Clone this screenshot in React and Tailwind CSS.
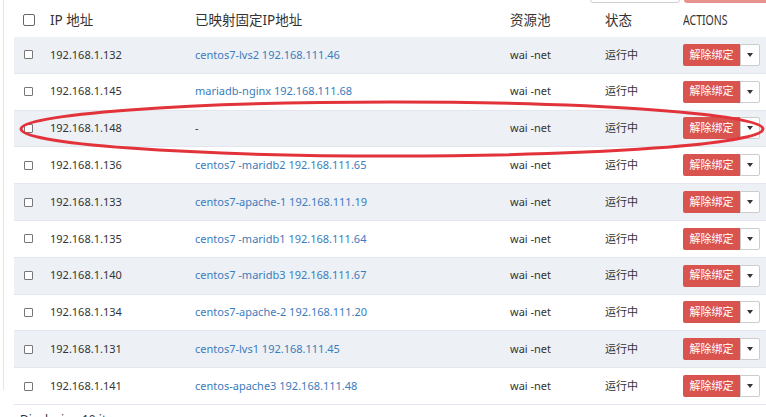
import React from "react";

const rows = [
  { ip: "192.168.1.132", mapped: "centos7-lvs2 192.168.111.46" },
  { ip: "192.168.1.145", mapped: "mariadb-nginx 192.168.111.68" },
  { ip: "192.168.1.148", mapped: "" },
  { ip: "192.168.1.136", mapped: "centos7 -maridb2 192.168.111.65" },
  { ip: "192.168.1.133", mapped: "centos7-apache-1 192.168.111.19" },
  { ip: "192.168.1.135", mapped: "centos7 -maridb1 192.168.111.64" },
  { ip: "192.168.1.140", mapped: "centos7 -maridb3 192.168.111.67" },
  { ip: "192.168.1.134", mapped: "centos7-apache-2 192.168.111.20" },
  { ip: "192.168.1.131", mapped: "centos7-lvs1 192.168.111.45" },
  { ip: "192.168.1.141", mapped: "centos-apache3 192.168.111.48" },
];

const cols = "grid grid-cols-[36px_145px_315px_95px_78px_1fr] items-center";

const App = () => {
  return (
    <div
      className="relative h-[417px] w-[766px] overflow-hidden bg-white text-[#333]"
      style={{ fontFamily: '"Noto Sans", "Noto Sans CJK SC", sans-serif' }}
    >
      <div className="ml-[3px] h-full border-l border-[#e4e4e4] pl-[10px]">
        <div className="-mt-[27px]">
          {/* toolbar, scrolled mostly out of view */}
          <div className="flex h-[30px] justify-end gap-[4px]">
            <div className="w-[90px] rounded-b-[3px] border border-[#cfcfcf] bg-white" />
            <div className="w-[82px] rounded-bl-[3px] bg-[#e8928e]" />
          </div>

          {/* header */}
          <div className={`${cols} h-[34px] text-[13.5px]`}>
            <div className="pl-[9px]">
              <div className="h-[12px] w-[12px] rounded-[2px] border border-[#666] bg-white" />
            </div>
            <div>IP 地址</div>
            <div>已映射固定IP地址</div>
            <div>资源池</div>
            <div>状态</div>
            <div>
              <span className="inline-block origin-left scale-x-[0.78] text-[13.5px]">ACTIONS</span>
            </div>
          </div>

          {/* rows */}
          {rows.map((r, i) => (
            <div
              key={r.ip}
              className={`${cols} h-[36.8px] border-b border-[#e3e6ee] text-[11px] ${
                i % 2 === 0 ? "bg-[#edf0f5]" : "bg-white"
              }`}
            >
              <div className="pl-[10px]">
                <div className="h-[9px] w-[9px] rounded-[1px] border border-[#777] bg-white" />
              </div>
              <div>{r.ip}</div>
              <div className="text-[#3b7cbd]">
                {r.mapped ? r.mapped : <span className="text-[#333]">-</span>}
              </div>
              <div>wai -net</div>
              <div>运行中</div>
              <div className="flex items-center">
                <button className="h-[22px] w-[57px] rounded-l-[2px] bg-[#d9534f] text-[11px] text-white">
                  解除绑定
                </button>
                <button className="flex h-[22px] w-[20px] items-center justify-center rounded-r-[2px] border border-[#ccc] bg-white">
                  <span className="h-0 w-0 border-x-[3px] border-t-[4px] border-x-transparent border-t-[#333]" />
                </button>
              </div>
            </div>
          ))}

          <div className="pl-[6px] pt-[6px] text-[12px]">Displaying 10 items</div>
        </div>
      </div>

      {/* red annotation ellipse */}
      <svg className="pointer-events-none absolute left-0 top-0" width="766" height="417">
        <ellipse cx="392" cy="129" rx="371" ry="27" fill="none" stroke="#e2333b" strokeWidth="3" />
      </svg>
    </div>
  );
};

export default App;
